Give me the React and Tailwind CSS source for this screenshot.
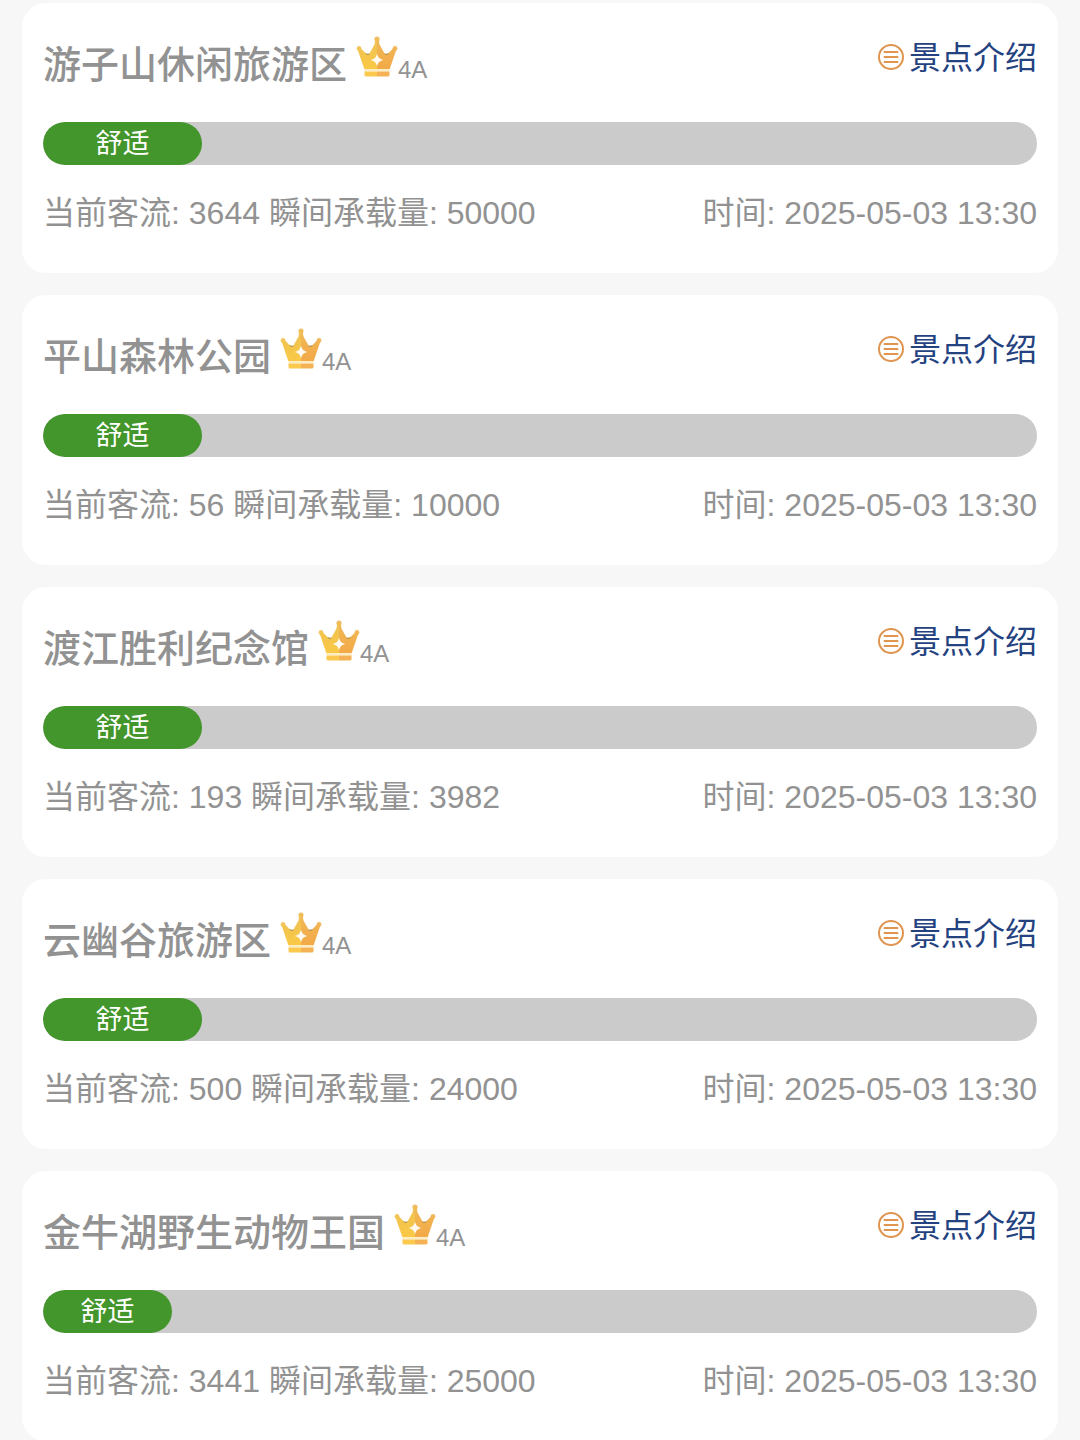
const SPOTS = [
  { name: '游子山休闲旅游区', level: '4A', status: '舒适', flow: 3644, capacity: 50000, percent: 16 },
  { name: '平山森林公园', level: '4A', status: '舒适', flow: 56, capacity: 10000, percent: 16 },
  { name: '渡江胜利纪念馆', level: '4A', status: '舒适', flow: 193, capacity: 3982, percent: 16 },
  { name: '云幽谷旅游区', level: '4A', status: '舒适', flow: 500, capacity: 24000, percent: 16 },
  { name: '金牛湖野生动物王国', level: '4A', status: '舒适', flow: 3441, capacity: 25000, percent: 13 },
];

const UPDATED_AT = '2025-05-03 13:30';

function CrownIcon() {
  return (
    <svg viewBox="0 0 42 42" className="h-[42px] w-[42px] shrink-0" aria-hidden="true">
      <defs>
        <linearGradient id="crown-left" x1="0" y1="0" x2="0" y2="1">
          <stop offset="0" stopColor="#efc154" />
          <stop offset="1" stopColor="#fac945" />
        </linearGradient>
        <linearGradient id="crown-right" x1="0" y1="0" x2="0" y2="1">
          <stop offset="0" stopColor="#f0b956" />
          <stop offset="1" stopColor="#f3a948" />
        </linearGradient>
      </defs>
      <circle cx="21" cy="3" r="2.6" fill="#efbe62" />
      <circle cx="3" cy="12.5" r="2.4" fill="#f3c965" />
      <circle cx="39" cy="12.5" r="2.4" fill="#f0bb60" />
      <path d="M21 3 H19.4 L18.5 8.5 L13.5 17.5 Q11.5 18.5 9.5 17 L4 11.5 L1.6 13.5 L8.3 33 H21 Z" fill="url(#crown-left)" />
      <path d="M21 3 H22.6 L23.5 8.5 L28.5 17.5 Q30.5 18.5 32.5 17 L38 11.5 L40.4 13.5 L33.7 33 H21 Z" fill="url(#crown-right)" />
      <path d="M9.3 17 Q11.5 18.4 13.8 17.2 L13 18.8 H10.5 Z M32.7 17 Q30.5 18.4 28.2 17.2 L29 18.8 H31.5 Z" fill="#a58c4c" />
      <path d="M8.3 33 H33.7 V35.5 H8.3 Z" fill="#fdedc4" />
      <path d="M8.5 35.5 H21 V40.5 H10 Q8.5 40.5 8.5 39 Z" fill="#fac94e" />
      <path d="M21 35.5 H33.5 V39 Q33.5 40.5 32 40.5 H21 Z" fill="#f4b254" />
      <path d="M21 20 Q22 23 25 24 Q22 25 21 28 Q20 25 17 24 Q20 23 21 20 Z" fill="#fffaf0" stroke="#fffaf0" strokeWidth="1.4" />
    </svg>
  );
}

function ListIcon() {
  return (
    <svg
      viewBox="0 0 28 28"
      className="h-7 w-7 shrink-0"
      fill="none"
      stroke="#e0954f"
      strokeWidth="2"
      strokeLinecap="round"
      aria-hidden="true"
    >
      <circle cx="13" cy="13" r="12" />
      <path d="M6.5 8 H19.5 M6.5 13 H19.5 M6.5 18 H19.5" />
    </svg>
  );
}

function SpotCard({ spot }) {
  return (
    <article className="rounded-3xl bg-white px-[21px] pt-8 pb-9">
      <div className="flex items-start justify-between">
        <div className="flex items-start">
          <h2 className="text-[38px] leading-[60px] font-medium text-[#929292]">{spot.name}</h2>
          <div className="ml-[9px] flex items-start pt-px">
            <CrownIcon />
            <span className="pt-5 text-2xl leading-7 text-[#929292]">{spot.level}</span>
          </div>
        </div>
        <a href="#intro" className="flex items-center text-[32px] leading-[46px] text-[#24427f]">
          <ListIcon />
          <span className="ml-[3px]">景点介绍</span>
        </a>
      </div>

      <div
        role="progressbar"
        aria-label={spot.name}
        aria-valuenow={spot.percent}
        className="mt-[27px] h-[43px] overflow-hidden rounded-full bg-[#cbcbcb]"
      >
        <div
          className="h-full rounded-full bg-[#43962b] text-center text-[27px] leading-[44px] text-white"
          style={{ width: `${spot.percent}%` }}
        >
          {spot.status}
        </div>
      </div>

      <div className="mt-6 flex justify-between text-[32px] leading-[48px] text-[#929292]">
        <p>
          当前客流: {spot.flow} 瞬间承载量: {spot.capacity}
        </p>
        <p>时间: {UPDATED_AT}</p>
      </div>
    </article>
  );
}

export default function App() {
  return (
    <main
      lang="zh-CN"
      className="flex min-h-screen flex-col gap-[22px] bg-[#f7f7f7] px-[22px] pt-[3px] font-['Liberation_Sans','Noto_Sans_CJK_SC',sans-serif]"
    >
      {SPOTS.map((spot) => (
        <SpotCard key={spot.name} spot={spot} />
      ))}
    </main>
  );
}
